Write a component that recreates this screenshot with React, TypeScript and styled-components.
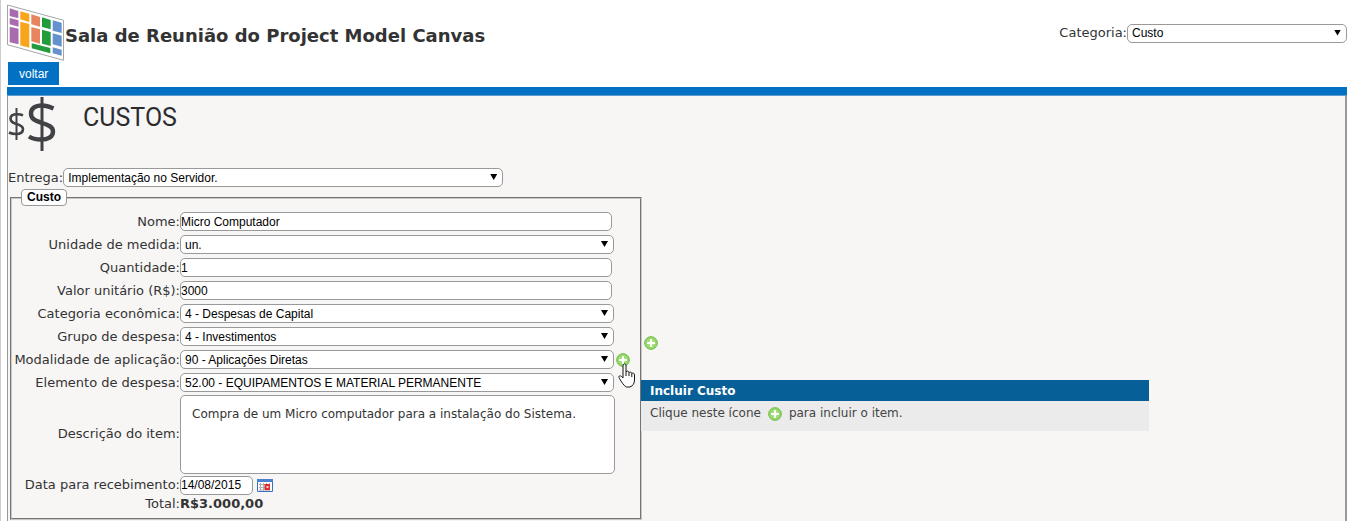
import React, { useId } from "react";
import styled, { createGlobalStyle } from "styled-components";

const GlobalStyle = createGlobalStyle`
  * { box-sizing: border-box; }
  html, body, #root { min-height: 100%; }
  html { height: 100%; }
  body {
    margin: 0;
    height: 100%;
    background: #fff;
    color: #333;
    font: 13px/16px "DejaVu Sans", Verdana, sans-serif;
  }
  #root { height: 100%; }
`;

const Page = styled.div`
  display: flex;
  flex-direction: column;
  min-height: 100%;
  padding: 4px 1px 0 6px;
  border-left: 1px solid #ccc;
`;

const Header = styled.header`
  display: flex;
  align-items: center;
  justify-content: space-between;
  height: 58px;
`;

const Brand = styled.div`
  display: flex;
  align-items: center;
`;

const Title = styled.h1`
  margin: 5px 0 0;
  color: #333;
  font-size: 18px;
  line-height: 24px;
  white-space: nowrap;
`;

const Toolbar = styled.div`
  display: flex;
  height: 25px;
  padding-left: 1px;
`;

const BackButton = styled.button`
  height: 23px;
  padding: 0 11px;
  border: 0;
  background: #0270c3;
  color: #fff;
  font: 12px/22px "Liberation Sans", Arial, sans-serif;
`;

const Panel = styled.main`
  flex: 1;
  border-left: 1px solid #999;
  border-right: 2px solid #999;
  background: #f7f6f5;
`;

const Rule = styled.div`
  height: 9px;
  border-bottom: 1px solid #5f9fd0;
  background: #0270c3;
`;

const SectionTitle = styled.h2`
  display: flex;
  height: 72px;
  margin: 0;
  gap: 25px;
  color: #2b2c2e;
  font: 25px/44px "Roboto", sans-serif;
`;

const Line = styled.div`
  display: flex;
  align-items: center;
`;

const Select = styled.select`
  display: block;
  width: 100%;
  height: 19px;
  padding: 0 16px 0 4px;
  border: 1px solid #999;
  border-radius: 5px;
  appearance: none;
  background: #fff;
  color: #000;
  font: 12px/16px "Liberation Sans", Arial, sans-serif;
`;

const SelectFrame = styled.span<{ $width: number }>`
  position: relative;
  display: block;
  width: ${(p) => p.$width}px;
  &::after {
    content: "";
    position: absolute;
    top: 6px;
    right: 6px;
    width: 7px;
    height: 6px;
    background: #000;
    clip-path: polygon(0 0, 100% 0, 50% 100%);
    pointer-events: none;
  }
`;

const TextInput = styled.input<{ $width: number }>`
  display: block;
  width: ${(p) => p.$width}px;
  height: 19px;
  padding: 0;
  border: 1px solid #999;
  border-radius: 5px;
  background: #fff;
  color: #000;
  font: 12px/16px "Liberation Sans", Arial, sans-serif;
`;

const Description = styled.textarea`
  display: block;
  width: 435px;
  height: 79px;
  padding: 10px 11px;
  border: 1px solid #999;
  border-radius: 5px;
  resize: none;
  background: #fff;
  color: #333;
  font: 12px/16px "DejaVu Sans", Verdana, sans-serif;
`;

const Workspace = styled.div`
  display: flex;
  align-items: center;
  gap: 2px;
  padding: 2px 0 0 2px;
`;

const Group = styled.fieldset`
  width: 632px;
  margin: 0;
  padding: 4px 0 6px 1px;
  border: 2px groove #c8c8c8;
`;

const Legend = styled.legend`
  height: 17px;
  margin-left: 8px;
  padding: 0 5px;
  border: 1px solid #999;
  border-radius: 4px;
  background: #fff;
  color: #000;
  font: bold 12px/15px "Liberation Sans", Arial, sans-serif;
`;

const Fields = styled.div`
  display: grid;
  grid-template-columns: 167px 1fr;
  align-items: center;
`;

const FieldLabel = styled.label`
  text-align: right;
  white-space: nowrap;
`;

const Control = styled.div<{ $height: number; $gap?: number }>`
  display: flex;
  align-items: center;
  gap: ${(p) => p.$gap ?? 2}px;
  height: ${(p) => p.$height}px;
`;

const IconButton = styled.button`
  display: block;
  flex: none;
  padding: 0;
  border: 0;
  background: none;
  line-height: 0;
`;

const TipAnchor = styled.span`
  position: relative;
`;

const Pointer = styled.svg`
  position: absolute;
  z-index: 2;
  top: 10px;
  left: 2px;
  pointer-events: none;
`;

const Tooltip = styled.div`
  position: absolute;
  z-index: 1;
  top: 27px;
  left: 25px;
  width: 508px;
  background: #ebebeb;
  color: #444;
`;

const TipTitle = styled.div`
  padding: 3px 9px 2px;
  background: #075f97;
  color: #fff;
  font-size: 12px;
  font-weight: bold;
`;

const TipBody = styled.div`
  display: flex;
  gap: 7px;
  height: 30px;
  padding: 4px 9px;
  font-size: 12px;
`;

const TipIcon = styled.span`
  padding-top: 2px;
  line-height: 0;
`;

const SideAction = styled.div`
  padding-bottom: 23px;
`;

function Logo() {
  return (
    <svg width="58" height="58" viewBox="0 0 58 58" aria-hidden="true">
      <path d="M.5 1 56.5 16.3v40L.5 40.700z" fill="#fff" stroke="#a5a5a5" />
      <path
        fill="#a86bb0"
        d="M2.700 4.300 11.300 7v7.300L2.700 12zM2.700 14l8.800 2.300v6.400l-8.800-2.400zM2.700 22.700l8.800 2v15.600l-8.800-2z"
      />
      <path fill="#f8a51b" d="M13.300 7.300l9 2.400V18l-9-2.700zM13.300 17.700l9 2.300v23.700l-9-2.400z" />
      <path fill="#e8855f" d="M24.300 10.300 33 13v9.700l-8.700-2.400zM24.300 23l8.700 2.300v14.400l-8.700-2.400z" />
      <path
        fill="#229b3c"
        d="M35 13.300l8.700 2.700v9.300L35 23zM35 25.700l8.700 2.300v14L35 39.700zM24.700 39.300 43.300 44v5.300l-18.600-5z"
      />
      <path
        fill="#6592cf"
        d="M45.700 16.300l9 2.400V29l-9-2.300zM45.700 29.300l9 2.400v11l-9-2.400zM45.700 43.300l9 2.400v6l-9-2.400z"
      />
    </svg>
  );
}

function Dollars() {
  return (
    <svg width="50" height="58" viewBox="0 0 50 58" aria-hidden="true" fill="none" stroke="#414246">
      <path
        strokeWidth="2.6"
        d="M15 19.300C13 18.300 11 18.200 9 18.200c-4.500 0-6.500 1.800-6.500 4.300 0 3.500 2.500 4.200 6 5.500 3.500 1 6.500 2.500 6.500 5 0 3.500-3 5-7 5-3 0-5-.5-7-1.500"
      />
      <path strokeWidth="2" d="M8.500 12v32" />
      <path
        strokeWidth="4.4"
        d="M45.500 12.500C41 10.500 37 9.500 34 9.500c-7 0-11 3-11 8 0 5.500 4 7 11 9.500 7 2 11 4 11 8.500 0 5.500-5 8-12 8-5 0-9-1-12-3"
      />
      <path strokeWidth="3" d="M34 1v54" />
    </svg>
  );
}

function Plus() {
  const id = useId();
  return (
    <svg width="14" height="14" viewBox="0 0 14 14" aria-hidden="true">
      <defs>
        <radialGradient id={id}>
          <stop offset="0" stopColor="#c5ec9c" />
          <stop offset="1" stopColor="#86d05a" />
        </radialGradient>
      </defs>
      <circle cx="7" cy="7" r="6.400" fill={`url(#${id})`} stroke="#7cc35a" />
      <path d="M7 3v8M3 7h8" stroke="#fff" strokeWidth="2" />
    </svg>
  );
}

function Calendar() {
  return (
    <svg width="16" height="13" viewBox="0 0 16 13" aria-hidden="true">
      <path d="M.5.5h15v12H.5z" fill="#fff" stroke="#3f6fc0" />
      <path d="M0 0h16v3H0z" fill="#4b7fd0" />
      <path d="M2 5.500h11M2 8.500h11M2 11h11M3.500 4v8M6.500 4v8M9.500 4v8M12.500 4v8" stroke="#b0b0b8" />
      <path d="M7.500 5h5.500v6H7.500z" fill="#d8302c" />
      <path d="M9.500 7h2v2h-2z" fill="#fbd5d0" />
    </svg>
  );
}

function Dropdown({ id, value, width }: { id: string; value: string; width: number }) {
  return (
    <SelectFrame $width={width}>
      <Select id={id} defaultValue={value}>
        <option>{value}</option>
      </Select>
    </SelectFrame>
  );
}

type Field = { id: string; label: string; value: string; kind: "text" | "select"; tip?: boolean };

const fields: Field[] = [
  { id: "nome", label: "Nome:", value: "Micro Computador", kind: "text" },
  { id: "unidade", label: "Unidade de medida:", value: "un.", kind: "select" },
  { id: "quantidade", label: "Quantidade:", value: "1", kind: "text" },
  { id: "valor", label: "Valor unitário (R$):", value: "3000", kind: "text" },
  { id: "categoria-economica", label: "Categoria econômica:", value: "4 - Despesas de Capital", kind: "select" },
  { id: "grupo", label: "Grupo de despesa:", value: "4 - Investimentos", kind: "select" },
  { id: "modalidade", label: "Modalidade de aplicação:", value: "90 - Aplicações Diretas", kind: "select", tip: true },
  { id: "elemento", label: "Elemento de despesa:", value: "52.00 - EQUIPAMENTOS E MATERIAL PERMANENTE", kind: "select" },
];

function IncludeTip() {
  return (
    <TipAnchor>
      <IconButton type="button" aria-label="Incluir custo">
        <Plus />
      </IconButton>
      <Pointer width="18" height="25" viewBox="0 0 18 25" aria-hidden="true">
        <path
          d="M5 3c0-3 3-3 3 0v6c.5-1.300 3-1.200 3 .8.500-1.200 2.800-1 2.800 1 .5-1.200 2.700-.8 2.700 1V17c0 3-1.500 6-4.500 7H8.500C6 23 3.500 19 1.500 15.500 0 13 2 12 3.500 13.500L5 15z"
          fill="#fff"
          stroke="#111"
          strokeLinejoin="round"
        />
        <path d="M8 9v4M11 10v3M13.800 11v3" stroke="#111" />
      </Pointer>
      <Tooltip role="tooltip">
        <TipTitle>Incluir Custo</TipTitle>
        <TipBody>
          <span>Clique neste ícone</span>
          <TipIcon>
            <Plus />
          </TipIcon>
          <span>para incluir o item.</span>
        </TipBody>
      </Tooltip>
    </TipAnchor>
  );
}

export default function App() {
  return (
    <>
      <GlobalStyle />
      <Page>
        <Header>
          <Brand>
            <Logo />
            <Title>Sala de Reunião do Project Model Canvas</Title>
          </Brand>
          <Line>
            <label htmlFor="categoria">Categoria:</label>
            <Dropdown id="categoria" value="Custo" width={220} />
          </Line>
        </Header>
        <Toolbar>
          <BackButton type="button">voltar</BackButton>
        </Toolbar>
        <Rule />
        <Panel>
          <SectionTitle>
            <Dollars />
            CUSTOS
          </SectionTitle>
          <Line>
            <label htmlFor="entrega">Entrega:</label>
            <Dropdown id="entrega" value="Implementação no Servidor." width={440} />
          </Line>
          <Workspace>
            <Group>
              <Legend>Custo</Legend>
              <Fields>
                {fields.map((f) => (
                  <React.Fragment key={f.id}>
                    <FieldLabel htmlFor={f.id}>{f.label}</FieldLabel>
                    <Control $height={23}>
                      {f.kind === "select" ? (
                        <Dropdown id={f.id} value={f.value} width={434} />
                      ) : (
                        <TextInput id={f.id} defaultValue={f.value} $width={432} />
                      )}
                      {f.tip && <IncludeTip />}
                    </Control>
                  </React.Fragment>
                ))}
                <FieldLabel htmlFor="descricao">Descrição do item:</FieldLabel>
                <Control $height={80}>
                  <Description id="descricao" defaultValue="Compra de um Micro computador para a instalação do Sistema." />
                </Control>
                <FieldLabel htmlFor="data">Data para recebimento:</FieldLabel>
                <Control $height={22} $gap={4}>
                  <TextInput id="data" defaultValue="14/08/2015" $width={73} />
                  <IconButton type="button" aria-label="Abrir calendário">
                    <Calendar />
                  </IconButton>
                </Control>
                <FieldLabel as="span">Total:</FieldLabel>
                <strong>R$3.000,00</strong>
              </Fields>
            </Group>
            <SideAction>
              <IconButton type="button" aria-label="Incluir item">
                <Plus />
              </IconButton>
            </SideAction>
          </Workspace>
        </Panel>
      </Page>
    </>
  );
}
